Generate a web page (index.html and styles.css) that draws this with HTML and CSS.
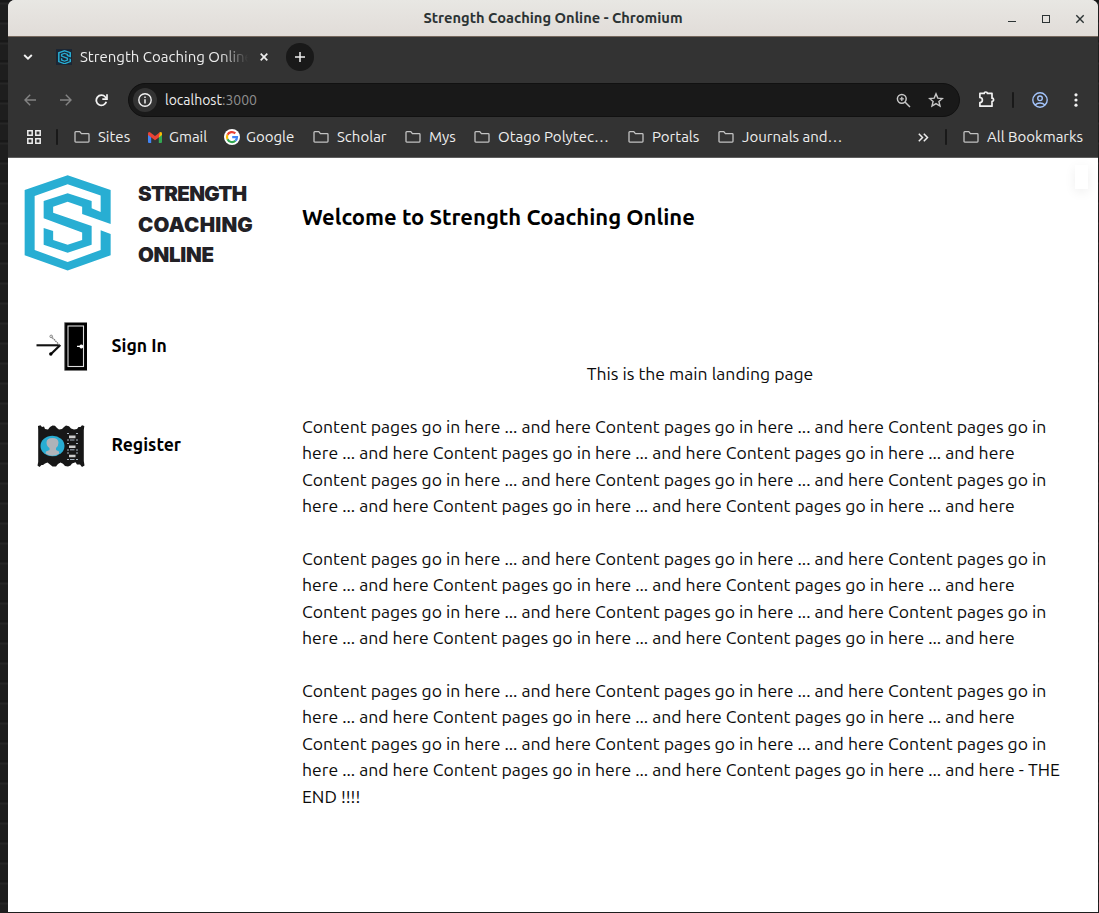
FILE: index.html
```html
<!DOCTYPE html>
<html lang="en">
<head>
<meta charset="utf-8">
<title>Strength Coaching Online</title>
<link rel="stylesheet" href="styles.css">
</head>
<body>
<svg width="0" height="0" class="defs" aria-hidden="true">
  <symbol id="folder" viewBox="0 0 16 14">
    <path d="M1.8 1.7h4l1.6 2h6.8c.5 0 .8.3.8.8v6.8c0 .5-.3.8-.8.8H1.8c-.5 0-.8-.3-.8-.8V2.5c0-.5.3-.8.8-.8z" fill="none" stroke="#c2c2c2" stroke-width="1.3"/>
  </symbol>
  <symbol id="brand" viewBox="-.4 0 86.500 96">
    <path d="M43 .3L86 15V49L57.500 39V31.700L43 26.700L28.500 31.700V37.700L67 51V69.700L43 77.700L19 69.700V53L28.500 56V65L43 69.700L57.500 65V57.500L19 43.300V26L43 18.300L67 26V33.300L76 37V20.500L43 9.300L10 21V75L43 87L76 75V55.300L86 59V80.300L43 95.600L0 80.300V15Z" fill="#28aed3"/>
  </symbol>
</svg>
<div class="desktop">
  <div class="window">
    <header class="titlebar">
      <span class="title">Strength Coaching Online - Chromium</span>
      <svg class="controls" width="78" height="14" viewBox="0 0 78 14" fill="none" stroke="#2c3334">
        <path d="M0 10.500h8" stroke-width="1"/>
        <rect x="34.500" y="4.500" width="7" height="7" stroke-width="1"/>
        <path d="M68.300 4.300l7.400 7.400M75.700 4.300l-7.400 7.400" stroke-width="1.400"/>
      </svg>
    </header>
    <div class="chrome">
      <div class="tabstrip">
        <svg class="chev" width="10" height="8" viewBox="0 0 10 8"><path d="M1.200 2L5 5.700L8.800 2" fill="none" stroke="#f2f2f2" stroke-width="1.900"/></svg>
        <span class="favicon"><svg width="13" height="14.500"><use href="#brand"/></svg></span>
        <span class="tabname">Strength Coaching Online</span>
        <svg class="tabclose" width="8" height="8" viewBox="0 0 8 8"><path d="M.700.700l6.600 6.600M7.300.700L.700 7.300" stroke="#eee" stroke-width="1.700"/></svg>
        <span class="newtab"><svg width="10" height="10" viewBox="0 0 10 10"><path d="M5 0v10M0 5h10" stroke="#eee" stroke-width="1.500"/></svg></span>
      </div>
      <div class="toolbar">
        <svg class="back" width="12" height="12" viewBox="0 0 12 12" fill="none" stroke="#848484" stroke-width="1.400"><path d="M12 6H1M6.200.800L1 6l5.200 5.200"/></svg>
        <svg class="forward" width="12" height="12" viewBox="0 0 12 12" fill="none" stroke="#848484" stroke-width="1.400"><path d="M0 6h11M5.800.800L11 6l-5.200 5.200"/></svg>
        <svg class="reload" width="13" height="13" viewBox="0 0 13 13" fill="none" stroke="#f2f2f2" stroke-width="1.800"><path d="M11.300 7.800A5.100 5.100 0 1 1 10.300 3L11.500 4.300"/><path d="M12 .300V5.100H7.300" stroke-width="1.700"/></svg>
        <div class="omnibox">
          <span class="info"><svg width="14" height="14" viewBox="0 0 14 14"><circle cx="7" cy="7" r="6.200" fill="none" stroke="#f0f0f0" stroke-width="1.400"/><path d="M7 6.200v4.200M7 3.500v1.600" stroke="#f0f0f0" stroke-width="1.500"/></svg></span>
          <span class="url">localhost<span class="port">:3000</span></span>
          <svg class="zoomicon" width="15" height="15" viewBox="0 0 15 15" fill="none" stroke="#c7c7c7" stroke-width="1.500"><circle cx="5.800" cy="5.800" r="4.400"/><path d="M9 9l5 5"/><path d="M5.800 3.700v4.200M3.700 5.800h4.200" stroke-width="1.300"/></svg>
          <svg class="star" width="16" height="16" viewBox="0 0 16 16"><path d="M8 1.900l1.800 4.200 4.600.400-3.500 3 1.100 4.500L8 11.600 4 14l1.100-4.500-3.500-3 4.600-.400z" fill="none" stroke="#c7c7c7" stroke-width="1.400"/></svg>
        </div>
        <svg class="puzzle" width="17" height="17" viewBox="0 0 17 17"><path d="M1.900 2.400H6.200a1.600 1.400 0 0 1 3.200 0H14V7.200a1.600 1.600 0 0 1 0 3.200V15.200H1.900V11.500a2.500 2.500 0 0 0 0-5z" fill="none" stroke="#f2f2f2" stroke-width="1.700" stroke-linejoin="round"/></svg>
        <span class="sep toolsep"></span>
        <svg class="profile" width="16" height="16" viewBox="0 0 16 16" fill="none" stroke="#a3c4fb" stroke-width="1.400"><circle cx="8" cy="8" r="7.200"/><circle cx="8" cy="6.300" r="2.300"/><path d="M3 13c2.800-2.600 7.200-2.600 10 0"/></svg>
        <svg class="dots" width="4" height="14" viewBox="0 0 4 14" fill="#f2f2f2"><circle cx="2" cy="1.800" r="1.600"/><circle cx="2" cy="7" r="1.600"/><circle cx="2" cy="12.200" r="1.600"/></svg>
      </div>
      <nav class="bookmarks">
        <svg class="apps" width="14" height="14" viewBox="0 0 14 14" fill="none" stroke="#eee" stroke-width="1.500"><path d="M.800.800h4.400v4.400H.800zM8.800.800h4.400v4.400H8.800zM.800 8.800h4.400v4.400H.800zM8.800 8.800h4.400v4.400H8.800z"/></svg>
        <span class="sep"></span>
        <span class="bm"><svg width="16" height="14"><use href="#folder"/></svg><span>Sites</span></span>
        <span class="bm gmail"><svg width="14" height="11" viewBox="0 0 14 11"><path d="M0 1.500L3.200 4v7H1Q0 11 0 10z" fill="#4285f4"/><path d="M14 1.500L10.800 4v7H13q1 0 1-1z" fill="#34a853"/><path d="M10.800 1L12 .200Q14-.500 14 1.600V3l-3.200 2.400z" fill="#fbbc04"/><path d="M0 3V1.600Q0-.500 2 .200L7 4.100 12 .200 10.800 5.400 7 8.300z" fill="#ea4335"/></svg><span>Gmail</span></span>
        <span class="bm google"><svg width="16" height="16" viewBox="0 0 16 16"><circle cx="8" cy="8" r="8" fill="#fff"/><g fill="none" stroke-width="2.200"><path d="M11.300 4.400A5 5 0 0 0 3.500 5.800" stroke="#ea4335"/><path d="M3.500 5.800a5 5 0 0 0 0 4.500" stroke="#fbbc04"/><path d="M3.500 10.300a5 5 0 0 0 7.900 1.500" stroke="#34a853"/><path d="M11.400 11.800A5 5 0 0 0 13 8.200H8.200" stroke="#4285f4"/></g></svg><span>Google</span></span>
        <span class="bm"><svg width="16" height="14"><use href="#folder"/></svg><span>Scholar</span></span>
        <span class="bm"><svg width="16" height="14"><use href="#folder"/></svg><span>Mys</span></span>
        <span class="bm"><svg width="16" height="14"><use href="#folder"/></svg><span>Otago Polytec…</span></span>
        <span class="bm"><svg width="16" height="14"><use href="#folder"/></svg><span>Portals</span></span>
        <span class="bm"><svg width="16" height="14"><use href="#folder"/></svg><span>Journals and…</span></span>
        <svg class="more" width="11" height="9" viewBox="0 0 11 9" fill="none" stroke="#eee" stroke-width="1.500"><path d="M.800.800L4.500 4.500.800 8.200M5.800.800l3.700 3.700-3.700 3.700"/></svg>
        <span class="sep"></span>
        <span class="bm"><svg width="16" height="14"><use href="#folder"/></svg><span>All Bookmarks</span></span>
      </nav>
    </div>
    <div class="page">
      <span class="bubble"></span>
      <aside class="side">
        <div class="logo">
          <svg width="87" height="96"><use href="#brand"/></svg>
          <div class="wordmark"><span class="w1">STRENGTH</span><span class="w2">COACHING</span><span class="w3">ONLINE</span></div>
        </div>
        <a class="item">
          <svg width="52" height="50" viewBox="0 0 52 50">
            <rect x="28.500" y=".500" width="22.500" height="48" fill="#000"/>
            <path d="M28.800 0v48.500h22.400" fill="none" stroke="#777" stroke-width=".500"/>
            <rect x="32" y="4" width="15.500" height="40.500" fill="none" stroke="#ddd" stroke-width="1.100"/>
            <path d="M41 23.800h2.500q.500-1.300 2-1.300 1.700.200 1.700 2 0 1.900-1.700 2-1.500 0-2-1.500H41z" fill="#fff"/>
            <path d="M.500 23.300h23" stroke="#111" stroke-width="2.100"/>
            <path d="M14.500 32.500L24.300 23" stroke="#111" stroke-width="2.300"/><circle cx="14.800" cy="32" r="1.700"/>
            <path d="M23.500 23l-8-8.200" stroke="#777" stroke-width="1.300" stroke-dasharray="1.500 .7"/><circle cx="15.200" cy="14.400" r="1.300" fill="none" stroke="#777" stroke-width=".900"/>
          </svg>
          <span>Sign In</span>
        </a>
        <a class="item register">
          <svg width="48" height="42" viewBox="0 0 48 42">
            <path d="M1 1L3.500.300 5 2 7 1.500 8 4 11 4.500 13 2 15.500.500 18 .800 20 3 22 4.500 25 4 27 2 29 .500 32 1.200 34 3.500 37 4.500 40 4 41.500 2 43.500 2 45 .300 47.300 1 46.800 5V36L47.500 40.500 45 42 43 39.500 40 39.500 38.500 37.300 35 38.500 33.500 40.500 31 41.500 28 41 26 38.700 23.500 37.500 21 39 19 41.500 15.500 41.500 13 39.500 10.500 37.500 8 38.500 6 40 4.500 40 2.500 42 .500 40.500 1.200 37V5z" fill="#171717"/>
            <ellipse cx="15.500" cy="21" rx="12" ry="10.300" fill="#28add3"/>
            <path d="M9.500 17.500Q9.500 13 15.500 13t6 4.800Q21.500 21 19 23v2l3 1.500v2.300Q15 33 8.500 28.500l.500-2L12.500 25v-2Q9.500 21 9.500 17.500z" fill="#afb3b9"/>
            <path d="M32 11.900h6.500M32 21.800h6.500M32 31h6.500" stroke="#ccc" stroke-width="2.600"/>
            <path d="M30 8.500h2M39 8.500h2M30 15h2M39 15h2M33 15h4.500M30 18.500h2M39 18.500h2M30 25h2M39 25h2M33 24.800h4.500M30 28h2M39 28h2M30 34.500h2M39 34.500h2M33 34.500h4.500" stroke="#a4b0bc" stroke-width="1"/>
          </svg>
          <span>Register</span>
        </a>
      </aside>
      <main class="main">
        <h1>Welcome to Strength Coaching Online</h1>
        <p class="lead">This is the main landing page</p>
        <p>Content pages go in here ... and here Content pages go in here ... and here Content pages go in here ... and here Content pages go in here ... and here Content pages go in here ... and here Content pages go in here ... and here Content pages go in here ... and here Content pages go in here ... and here Content pages go in here ... and here Content pages go in here ... and here</p>
        <p>Content pages go in here ... and here Content pages go in here ... and here Content pages go in here ... and here Content pages go in here ... and here Content pages go in here ... and here Content pages go in here ... and here Content pages go in here ... and here Content pages go in here ... and here Content pages go in here ... and here Content pages go in here ... and here</p>
        <p>Content pages go in here ... and here Content pages go in here ... and here Content pages go in here ... and here Content pages go in here ... and here Content pages go in here ... and here Content pages go in here ... and here Content pages go in here ... and here Content pages go in here ... and here Content pages go in here ... and here Content pages go in here ... and here - THE END !!!!</p>
      </main>
    </div>
  </div>
</div>
</body>
</html>
```
FILE: styles.css
```css
* { box-sizing: border-box; }
html, body { height: 100%; }
body { margin: 0; overflow: hidden; font-family: Ubuntu, "Noto Sans", sans-serif; }
svg { display: block; flex: none; }
.defs { position: absolute; }
.desktop {
  height: 913px;
  padding: 0 1px 1px 8px;
  background: repeating-linear-gradient(180deg, #181818 0 2px, #262626 3px 4px, #1e1e1e 5px 20px);
}
.window {
  height: 100%;
  display: flex;
  flex-direction: column;
  border-radius: 7px 7px 0 0;
  overflow: hidden;
  background: #fff;
}
.titlebar {
  height: 37px;
  flex: none;
  display: grid;
  grid-template-columns: 1fr auto 1fr;
  align-items: center;
  background: linear-gradient(#e8e7e3, #e1dcd8);
  border-bottom: 1px solid #75675c;
  color: #2c3334;
}
.title { grid-column: 2; padding-bottom: 2px; font-size: 14.67px; font-weight: 700; white-space: nowrap; }
.controls { justify-self: end; margin-right: 12px; }
.chrome { height: 121px; flex: none; background: #333; border-bottom: 1px solid #5e5e5e; color: #eee; font-size: 15px; }
.tabstrip { height: 40px; display: flex; align-items: center; padding-left: 15px; }
.favicon { width: 16px; height: 16px; margin-left: 23px; background: #1b2634; display: grid; place-items: center; }
.tabname {
  width: 168px;
  margin-left: 8px;
  padding-bottom: 2px;
  overflow: hidden;
  white-space: nowrap;
  -webkit-mask-image: linear-gradient(90deg, #000 140px, transparent 168px);
  mask-image: linear-gradient(90deg, #000 140px, transparent 168px);
}
.tabclose { margin-left: 12px; }
.newtab { width: 28px; height: 28px; margin-left: 18px; border-radius: 50%; background: #191919; display: grid; place-items: center; }
.toolbar { height: 46px; display: flex; align-items: center; padding-left: 16px; }
.forward { margin-left: 24px; }
.reload { margin-left: 23px; }
.omnibox {
  width: 832px;
  height: 34px;
  margin-left: 20px;
  padding-left: 4px;
  border-radius: 17px;
  border: 1px solid #111;
  background: #191919;
  display: flex;
  align-items: center;
}
.info { width: 24px; height: 24px; border-radius: 50%; background: #333; display: grid; place-items: center; }
.url { flex: 1; margin-left: 8px; font-size: 14px; }
.port { color: #8e8e8e; }
.zoomicon { margin-right: 17px; }
.star { margin-right: 15px; }
.puzzle { margin-left: 18px; margin-bottom: 1px; }
.sep { width: 2px; height: 16px; background: #191919; border-radius: 1px; }
.toolsep { margin-left: 17px; }
.profile { margin-left: 18px; }
.dots { margin-left: 26px; }
.bookmarks {
  height: 28px;
  padding-left: 19px;
  display: grid;
  grid-template-columns: 29px 18px 74px 76px 89px 92px 69px 154px 90px 200px 27px 18px auto;
  align-items: center;
}
.bm { display: flex; align-items: center; gap: 8px; white-space: nowrap; }
.bm span { padding-bottom: 2px; }
.gmail { gap: 7px; }
.google { gap: 6px; }
.page { position: relative; flex: 1; display: flex; color: #0b0b0b; }
.bubble { position: absolute; right: 10px; top: 7px; width: 13px; height: 24px; background: #fff; box-shadow: 0 3px 12px rgba(0, 0, 0, .07); }
.side { width: 294px; flex: none; padding: 17px 0 0 16px; }
.logo { display: flex; gap: 27px; height: 96px; }
.wordmark { display: flex; flex-direction: column; padding-top: 4px; font: 900 20.5px/30.5px Inter, sans-serif; color: #222126; }
.w1 { letter-spacing: -.7px; }
.w2 { letter-spacing: .2px; }
.w3 { letter-spacing: -.3px; }
.item { display: flex; align-items: center; gap: 23.5px; margin: 51px 0 0 12px; height: 50px; color: #000; font-size: 17.6px; font-weight: 600; }
.item span { padding-bottom: 3px; }
.register { margin: 49px 0 0 13px; gap: 26.5px; }
.main { width: 780px; padding-top: 42px; }
.main h1 { margin: 0; height: 33px; font-size: 22px; line-height: 33px; font-weight: 600; color: #000; }
.main p { width: 764px; margin: 0 0 26.4px; font-size: 17.6px; line-height: 26.4px; }
.main .lead { width: 796px; margin-top: 128.1px; text-align: center; }
```
